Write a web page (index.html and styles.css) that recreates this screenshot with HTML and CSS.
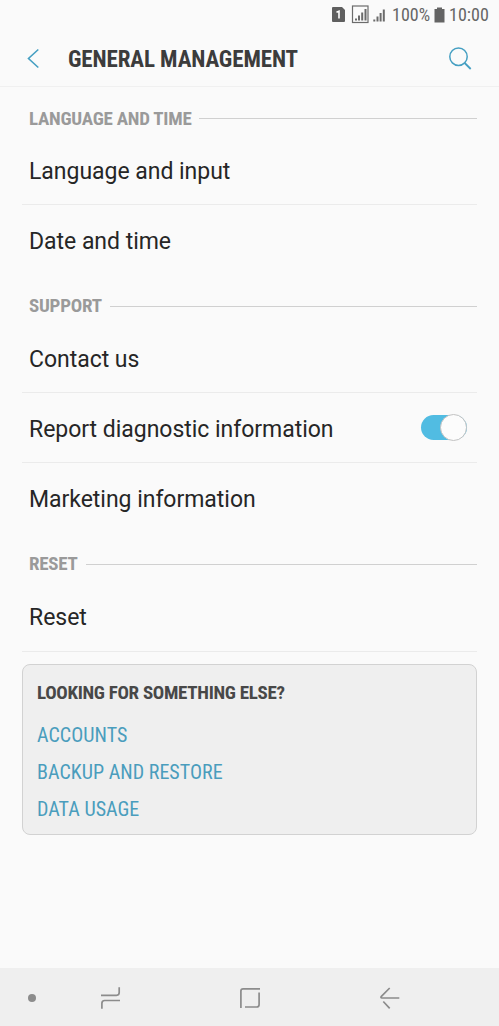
FILE: index.html
```html
<!DOCTYPE html>
<html lang="en">
<head>
<meta charset="utf-8">
<title>General management</title>
<link rel="stylesheet" href="styles.css">
</head>
<body>
<div class="screen">
  <div class="status">
    <svg class="status-icons" width="56" height="24" viewBox="0 0 56 24">
      <path d="M1 4h9l3 3v11a1 1 0 0 1-1 1H1a1 1 0 0 1-1-1V5a1 1 0 0 1 1-1z" fill="#5f5f5f"/>
      <path d="M4.500 9.300l2.500-1v7.200" fill="none" stroke="#fff" stroke-width="1.600"/>
      <rect x="20.500" y="3" width="15.500" height="16.500" fill="none" stroke="#6b6b6b" stroke-width="1.200"/>
      <path d="M24 17.500v-2M27 17.500v-5M30.200 17.500v-8M33.500 17.500v-11.500M42.300 18.500v-2M45.500 18.500v-5M48.600 18.500v-8.500M51.800 18.500v-12" stroke="#6b6b6b" stroke-width="2"/>
    </svg>
    <span class="cond pct">100%</span>
    <svg class="battery" width="11" height="16" viewBox="0 0 11 16"><path d="M3 .5h5v1.500h2.500v13.500H.5V2H3z" fill="#646464"/></svg>
    <span class="cond clock">10:00</span>
  </div>
  <header class="bar">
    <svg class="back" width="14" height="22" viewBox="0 0 14 22"><path d="M11.300 1.500L1.500 10.500l9.800 9" fill="none" stroke="#459fc2" stroke-width="1.600"/></svg>
    <h1 class="cond title">GENERAL MANAGEMENT</h1>
    <svg class="search" width="24" height="24" viewBox="0 0 24 24"><path d="M16.700 16l6 6" stroke="#459fc2" stroke-width="1.800"/><circle cx="10.500" cy="9.700" r="8.700" fill="none" stroke="#459fc2" stroke-width="1.500"/></svg>
  </header>
  <main class="list">
    <h2 class="section first"><span class="cond">LANGUAGE AND TIME</span></h2>
    <div class="row line"><span>Language and input</span></div>
    <div class="row"><span>Date and time</span></div>
    <h2 class="section"><span class="cond">SUPPORT</span></h2>
    <div class="row line"><span>Contact us</span></div>
    <div class="row line"><span>Report diagnostic information</span><i class="toggle"></i></div>
    <div class="row"><span>Marketing information</span></div>
    <h2 class="section"><span class="cond">RESET</span></h2>
    <div class="row line last"><span>Reset</span></div>
    <section class="card">
      <h3 class="cond">LOOKING FOR SOMETHING ELSE?</h3>
      <a class="cond">ACCOUNTS</a>
      <a class="cond">BACKUP AND RESTORE</a>
      <a class="cond">DATA USAGE</a>
    </section>
  </main>
  <nav class="nav">
    <svg width="499" height="58" viewBox="0 0 499 58" fill="none" stroke="#8c8c8c" stroke-width="1.700">
      <circle cx="32" cy="30" r="4" fill="#8c8c8c" stroke="none"/>
      <path d="M101 27.300h15.500q2.700 0 2.700-2.700V19.200M120 32.500h-15.300q-2.800 0-2.800 2.800V40.700"/>
      <path d="M240.900 40V23q0-2.200 2.200-2.200H260M259.100 24.500V36.500q0 2.500-2.500 2.500H245"/>
      <path d="M399.300 30H382q-1.800-.2-.6-1.600L389.700 20M383.300 33.500l6.400 6.800"/>
    </svg>
  </nav>
</div>
</body>
</html>
```
FILE: styles.css
```css
*, *::before, *::after { box-sizing: border-box; }
body { margin: 0; background: #fafafa; font-family: Roboto, "Liberation Sans", sans-serif; color: #262626; }
h1, h2, h3 { margin: 0; }
.screen { width: 499px; height: 1026px; display: flex; flex-direction: column; }
.cond { font-family: "Roboto Condensed", Roboto, sans-serif; font-stretch: 75%; white-space: nowrap; }
.status { height: 30px; padding: 0 10px 0 332px; display: flex; align-items: center; color: #666; font-size: 18px; line-height: 30px; }
.status-icons { flex: none; }
.pct { margin-left: 4px; }
.battery { flex: none; margin: 0 4px; }
.bar { height: 57px; border-bottom: 1px solid #f0f0f0; padding: 1px 27px 0; display: flex; align-items: center; }
.back { margin-right: 27px; flex: none; }
.title { flex: 1; padding-top: 1px; font-size: 23px; font-weight: 700; letter-spacing: -.1px; color: #3c3c3c; }
.search { flex: none; }
.list { flex: 1; padding: 0 22px; }
.section { height: 48px; padding: 14px 0 0 7px; display: flex; align-items: center; gap: 8px; font-size: 19px; line-height: 34px; font-weight: 700; letter-spacing: -.25px; color: #9a9a9a; }
.first .cond { padding-top: 1px; }
.section::after { content: ""; flex: 1; height: 1px; background: #d0d0d0; }
.row { height: 70px; padding: 2px 10px 0 7px; display: flex; align-items: center; justify-content: space-between; font-size: 23px; letter-spacing: -.03px; }
.line { border-bottom: 1px solid #ebebeb; padding-top: 3px; }
.last { height: 71px; }
.toggle { width: 46px; height: 25px; margin-top: -3px; border-radius: 13px; background: #51bce2; display: flex; justify-content: flex-end; align-items: center; }
.toggle::after { content: ""; flex: none; width: 27px; height: 27px; border: 1px solid #c2c2c2; border-radius: 50%; background: #fcfcfc; }
.card { margin-top: 12px; height: 171px; border: 1px solid #d2d2d2; border-radius: 8px; background: #efefef; padding: 12px 14px; display: flex; flex-direction: column; }
.card h3 { font-size: 19px; line-height: 32px; margin-bottom: 8px; letter-spacing: -.31px; color: #484848; }
.card a { font-size: 20px; line-height: 37px; letter-spacing: .03px; color: #4a9dbd; }
.nav { height: 58px; background: #efefef; }
.nav svg { display: block; }
```
